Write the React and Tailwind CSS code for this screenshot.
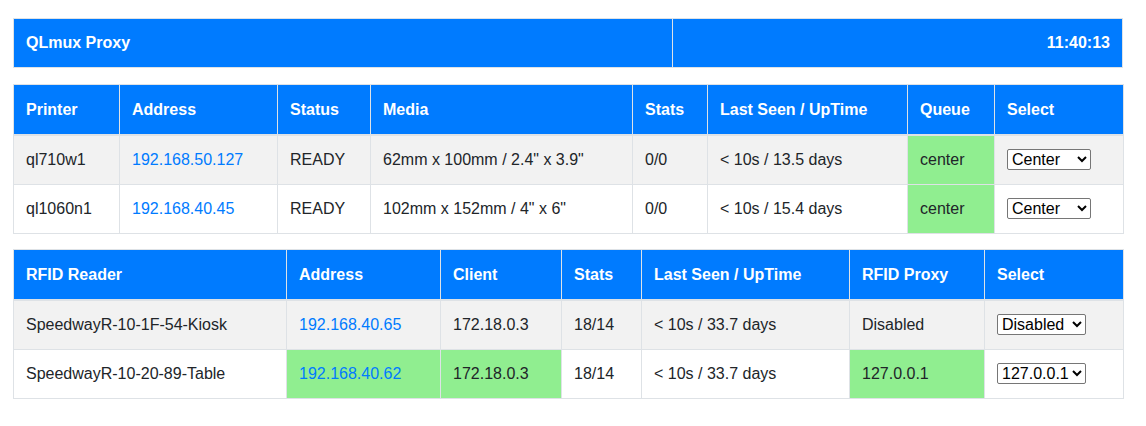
import React from "react";

const printers = [
  { name: "ql710w1", addr: "192.168.50.127", status: "READY", media: '62mm x 100mm / 2.4" x 3.9"', stats: "0/0", seen: "< 10s / 13.5 days", queue: "center" },
  { name: "ql1060n1", addr: "192.168.40.45", status: "READY", media: '102mm x 152mm / 4" x 6"', stats: "0/0", seen: "< 10s / 15.4 days", queue: "center" },
];

const readers = [
  { name: "SpeedwayR-10-1F-54-Kiosk", addr: "192.168.40.65", client: "172.18.0.3", stats: "18/14", seen: "< 10s / 33.7 days", proxy: "Disabled", active: false },
  { name: "SpeedwayR-10-20-89-Table", addr: "192.168.40.62", client: "172.18.0.3", stats: "18/14", seen: "< 10s / 33.7 days", proxy: "127.0.0.1", active: true },
];

const th = "bg-[#007bff] text-white font-bold text-left px-3 py-3 border border-[#dee2e6] leading-6";
const hd = "bg-[#007bff] text-white font-bold text-left px-3 pt-[13px] pb-3 border border-b-2 border-[#dee2e6] leading-6";
const td = "px-3 py-3 border border-[#dee2e6] leading-6 align-top";
const green = "bg-[#90ee90]";

const Select = ({ value, options, className }) => (
  <select
    defaultValue={value}
    className={`border border-[#767676] rounded-[2px] bg-white text-black text-base leading-tight ${className}`}
  >
    {options.map((o) => (
      <option key={o}>{o}</option>
    ))}
  </select>
);

export default function App() {
  return (
    <div
      className="px-[13px] pt-[18px] text-base text-[#212529] bg-white min-h-screen"
      style={{ fontFamily: '"Liberation Sans", Arial, sans-serif' }}
    >
      {/* Title bar */}
      <table className="w-[1110px] table-fixed border-collapse mb-4">
        <tbody>
          <tr>
            <th className={`${th} w-[659px]`}>QLmux Proxy</th>
            <th className={`${th} text-right`}>11:40:13</th>
          </tr>
        </tbody>
      </table>

      {/* Printers */}
      <table className="w-[1110px] table-fixed border-collapse mb-[15px]">
        <thead>
          <tr>
            <th className={`${hd} w-[106px]`}>Printer</th>
            <th className={`${hd} w-[158px]`}>Address</th>
            <th className={`${hd} w-[93px]`}>Status</th>
            <th className={`${hd} w-[262px]`}>Media</th>
            <th className={`${hd} w-[75px]`}>Stats</th>
            <th className={`${hd} w-[200px]`}>Last Seen / UpTime</th>
            <th className={`${hd} w-[87px]`}>Queue</th>
            <th className={`${hd} w-[129px]`}>Select</th>
          </tr>
        </thead>
        <tbody>
          {printers.map((p, i) => (
            <tr key={p.name} className={i % 2 === 0 ? "bg-[#f2f2f2]" : "bg-white"}>
              <td className={td}>{p.name}</td>
              <td className={td}>
                <a href="#" className="text-[#007bff]">{p.addr}</a>
              </td>
              <td className={td}>{p.status}</td>
              <td className={td}>{p.media}</td>
              <td className={td}>{p.stats}</td>
              <td className={td}>{p.seen}</td>
              <td className={`${td} ${green}`}>{p.queue}</td>
              <td className={`${td} align-middle`}>
                <Select value="Center" options={["Center", "Left", "Right"]} className="w-[84px]" />
              </td>
            </tr>
          ))}
        </tbody>
      </table>

      {/* RFID readers */}
      <table className="w-[1110px] table-fixed border-collapse">
        <thead>
          <tr>
            <th className={`${hd} w-[273px]`}>RFID Reader</th>
            <th className={`${hd} w-[154px]`}>Address</th>
            <th className={`${hd} w-[121px]`}>Client</th>
            <th className={`${hd} w-[80px]`}>Stats</th>
            <th className={`${hd} w-[208px]`}>Last Seen / UpTime</th>
            <th className={`${hd} w-[135px]`}>RFID Proxy</th>
            <th className={`${hd} w-[139px]`}>Select</th>
          </tr>
        </thead>
        <tbody>
          {readers.map((r, i) => (
            <tr key={r.name} className={i % 2 === 0 ? "bg-[#f2f2f2]" : "bg-white"}>
              <td className={td}>{r.name}</td>
              <td className={`${td} ${r.active ? green : ""}`}>
                <a href="#" className="text-[#007bff]">{r.addr}</a>
              </td>
              <td className={`${td} ${r.active ? green : ""}`}>{r.client}</td>
              <td className={td}>{r.stats}</td>
              <td className={td}>{r.seen}</td>
              <td className={`${td} ${r.active ? green : ""}`}>{r.proxy}</td>
              <td className={`${td} align-middle`}>
                <Select value={r.proxy} options={["Disabled", "127.0.0.1"]} className="w-[89px]" />
              </td>
            </tr>
          ))}
        </tbody>
      </table>
    </div>
  );
}
